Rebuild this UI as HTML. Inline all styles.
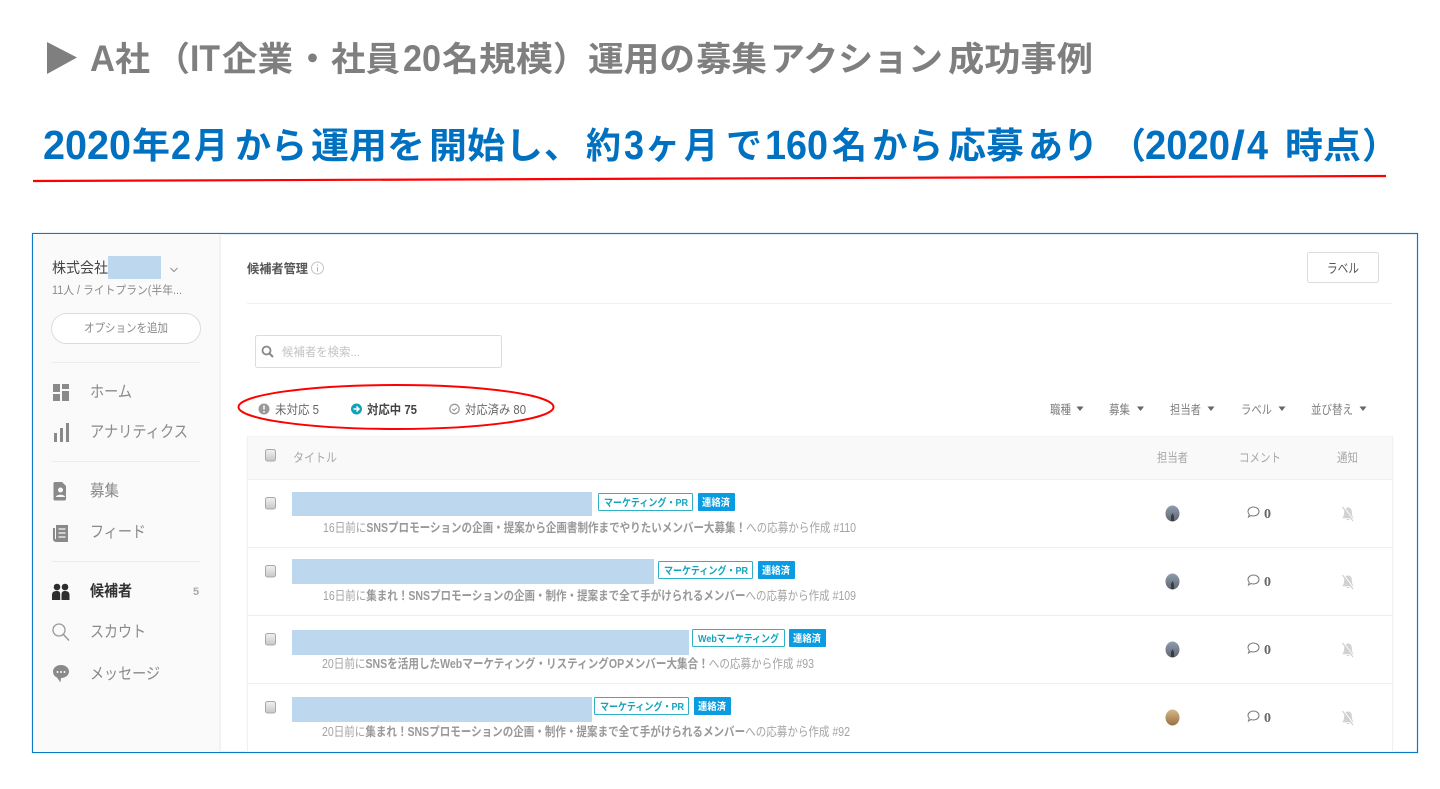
<!DOCTYPE html>
<html lang="ja">
<head>
<meta charset="utf-8">
<title>A社 運用の募集アクション成功事例</title>
<style>
html,body{margin:0;padding:0;background:#fff;width:1440px;height:789px;overflow:hidden}
svg{display:block}
text{font-family:"Liberation Sans","Noto Sans CJK JP",sans-serif}
.b{font-weight:700}
.s{font-size:13px;fill:#7f7f7f}
.n{font-size:16px;fill:#8a8a8a}
.h{font-size:12.5px;fill:#a8a8a8}
.sub{font-size:12.5px;fill:#a3a3a3}
.t1{font-size:10.5px;font-weight:700;fill:#14a5bd}
.t2{font-size:10px;font-weight:700;fill:#fff}
.g{font-weight:700;fill:#7f7f7f;font-size:34px}
.gl{font-weight:700;fill:#7f7f7f;font-size:37px}
.u{font-weight:700;fill:#0070c0;font-size:36px}
.ul{font-weight:700;fill:#0070c0;font-size:41px}
</style>
</head>
<body>
<svg width="1440" height="789" viewBox="0 0 1440 789" xmlns="http://www.w3.org/2000/svg">
<defs>
<linearGradient id="cb" x1="0" y1="0" x2="0" y2="1"><stop offset="0" stop-color="#f2f2f2"/><stop offset="1" stop-color="#c6c6c6"/></linearGradient>
<linearGradient id="av" x1="0" y1="0" x2="0" y2="1"><stop offset="0" stop-color="#8f9cb0"/><stop offset="1" stop-color="#5f6670"/></linearGradient>
<linearGradient id="av2" x1="0" y1="0" x2="0" y2="1"><stop offset="0" stop-color="#d5b888"/><stop offset="1" stop-color="#9a6f42"/></linearGradient>
<g id="check"><rect x=".5" y=".5" width="10" height="11.5" rx="2" fill="url(#cb)" stroke="#a9a9a9"/></g>
<g id="cm"><path d="M1 5.500C1 3 3.400 1 6.500 1S12 3 12 5.500 9.600 10 6.500 10C5.500 10 4.800 9.800 4 9.500L1.500 11 2.300 8.400C1.500 7.600 1 6.600 1 5.500Z" fill="none" stroke="#777" stroke-width="1"/></g>
<g id="bell"><path d="M7 1.500c-2.600 0-3.800 2-3.800 4.300 0 3-.8 5-1.900 6.500h11.400c-1.100-1.500-1.900-3.500-1.900-6.500C10.800 3.500 9.600 1.500 7 1.500Z" fill="#d2d2d2"/><path d="M5.300 13a1.800 1.800 0 0 0 3.400 0Z" fill="#d2d2d2"/><path d="M2.500 0.500l10.500 14" stroke="#fff" stroke-width="1"/><path d="M1.500 1l10.500 14" stroke="#cfcfcf" stroke-width="1.200"/></g>
<g id="ava"><ellipse cx="0" cy="0" rx="7" ry="8" fill="url(#av)"/><path d="M-1.500 7.500v-5l1.500-3 1.500 3v5Z" fill="#3c3c3c"/></g>
</defs>

<rect width="1440" height="789" fill="#fff"/>

<!-- Heading 1 -->
<path d="M47 42V74L77 57.500Z" fill="#7f7f7f"/>
<text x="90" y="71" class="gl" textLength="25" lengthAdjust="spacingAndGlyphs">A</text>
<text x="115" y="71" class="g" textLength="35" lengthAdjust="spacingAndGlyphs">社</text>
<text x="156" y="71" class="g">（</text>
<text x="190" y="71" class="gl" textLength="30" lengthAdjust="spacingAndGlyphs">IT</text>
<text x="222" y="71" class="g" textLength="71" lengthAdjust="spacingAndGlyphs">企業</text>
<text x="295.500" y="71" class="g">・</text>
<text x="331" y="71" class="g" textLength="69" lengthAdjust="spacingAndGlyphs">社員</text>
<text x="403" y="71" class="gl" textLength="38" lengthAdjust="spacingAndGlyphs">20</text>
<text x="442" y="71" class="g" textLength="111" lengthAdjust="spacingAndGlyphs">名規模</text>
<text x="553" y="71" class="g">）</text>
<text x="588" y="71" class="g" textLength="107" lengthAdjust="spacingAndGlyphs">運用の</text>
<text x="696" y="71" class="g" textLength="71" lengthAdjust="spacingAndGlyphs">募集</text>
<text x="770" y="71" class="g" textLength="173" lengthAdjust="spacingAndGlyphs">アクション</text>
<text x="948" y="71" class="g" textLength="145" lengthAdjust="spacingAndGlyphs">成功事例</text>

<!-- Heading 2 -->
<text x="43" y="159" class="ul" textLength="88" lengthAdjust="spacingAndGlyphs">2020</text>
<text x="132" y="158" class="u" textLength="38" lengthAdjust="spacingAndGlyphs">年</text>
<text x="171" y="159" class="ul" textLength="20" lengthAdjust="spacingAndGlyphs">2</text>
<text x="194" y="158" class="u" textLength="34" lengthAdjust="spacingAndGlyphs">月</text>
<text x="235" y="158" class="u" textLength="72" lengthAdjust="spacingAndGlyphs">から</text>
<text x="311" y="158" class="u" textLength="114" lengthAdjust="spacingAndGlyphs">運用を</text>
<text x="429" y="158" class="u" textLength="114" lengthAdjust="spacingAndGlyphs">開始し</text>
<text x="544" y="158" class="u">、</text>
<text x="586" y="158" class="u" textLength="35" lengthAdjust="spacingAndGlyphs">約</text>
<text x="624" y="159" class="ul" textLength="20" lengthAdjust="spacingAndGlyphs">3</text>
<text x="645" y="158" class="u" textLength="35" lengthAdjust="spacingAndGlyphs">ヶ</text>
<text x="684" y="158" class="u" textLength="34" lengthAdjust="spacingAndGlyphs">月</text>
<text x="726" y="158" class="u" textLength="36" lengthAdjust="spacingAndGlyphs">で</text>
<text x="765" y="159" class="ul" textLength="63" lengthAdjust="spacingAndGlyphs">160</text>
<text x="832" y="158" class="u" textLength="35" lengthAdjust="spacingAndGlyphs">名</text>
<text x="872" y="158" class="u" textLength="71" lengthAdjust="spacingAndGlyphs">から</text>
<text x="948" y="158" class="u" textLength="76" lengthAdjust="spacingAndGlyphs">応募</text>
<text x="1028" y="158" class="u" textLength="70" lengthAdjust="spacingAndGlyphs">あり</text>
<text x="1110" y="158" class="u">（</text>
<text x="1145" y="159" class="ul" textLength="85" lengthAdjust="spacingAndGlyphs">2020</text>
<text x="1231" y="159" class="ul" textLength="14" lengthAdjust="spacingAndGlyphs">/</text>
<text x="1247" y="159" class="ul" textLength="21" lengthAdjust="spacingAndGlyphs">4</text>
<text x="1285" y="158" class="u" textLength="76" lengthAdjust="spacingAndGlyphs">時点</text>
<text x="1362" y="158" class="u">）</text>
<path d="M33 181L1386 176" stroke="#f00" stroke-width="2.200"/>

<!-- Frame -->
<rect x="32.500" y="233.500" width="1385" height="519" fill="#fff" stroke="#0b78c8" stroke-width="1.200"/>
<rect x="33" y="234" width="186" height="518" fill="#fafafa"/>
<rect x="219" y="234" width="2" height="518" fill="#f2f2f2"/>

<!-- Sidebar header -->
<text x="52" y="273" font-size="14.500" fill="#444" textLength="56" lengthAdjust="spacingAndGlyphs">株式会社</text>
<rect x="108" y="256" width="53" height="23" fill="#bdd7ee"/>
<path d="M170.500 268l3.500 3.500 3.500-3.500" fill="none" stroke="#999" stroke-width="1.200"/>
<text x="52" y="294" font-size="11.500" fill="#8b8b8b" textLength="130" lengthAdjust="spacingAndGlyphs">11人 / ライトプラン(半年...</text>
<rect x="51.500" y="313.500" width="149" height="30" rx="15" fill="#fff" stroke="#dcdcdc"/>
<text x="84" y="332" font-size="12" fill="#8a8a8a" textLength="84" lengthAdjust="spacingAndGlyphs">オプションを追加</text>
<rect x="52" y="362" width="148" height="1" fill="#ececec"/>

<!-- Sidebar nav -->
<g fill="#8a8a8a">
<rect x="53" y="384" width="7" height="8"/><rect x="62" y="384" width="7" height="5"/><rect x="53" y="394" width="7" height="7"/><rect x="62" y="391" width="7" height="10"/>
<rect x="54" y="433" width="3" height="9"/><rect x="60" y="428" width="3" height="14"/><rect x="66" y="423" width="3" height="19"/>
<path d="M55 482h7l4 4v13a1.500 1.500 0 0 1-1.500 1.500h-9.500A1.500 1.500 0 0 1 53.500 499v-15.500A1.500 1.500 0 0 1 55 482Z"/>
<path d="M56 525h12v17H56a3 3 0 0 1-3-3v-11h2v11h1Z"/>
</g>
<circle cx="60.500" cy="490" r="2.500" fill="#fafafa"/><path d="M56 497c0-3 9-3 9 0Z" fill="#fafafa"/>
<path d="M58.500 529h7M58.500 533h7M58.500 537h7" stroke="#fafafa" stroke-width="1.300"/>
<text x="90" y="397" class="n" textLength="42" lengthAdjust="spacingAndGlyphs">ホーム</text>
<text x="90" y="437" class="n" textLength="98" lengthAdjust="spacingAndGlyphs">アナリティクス</text>
<rect x="52" y="461" width="148" height="1" fill="#ececec"/>
<text x="90" y="496" class="n" textLength="29" lengthAdjust="spacingAndGlyphs">募集</text>
<text x="90" y="537" class="n" textLength="56" lengthAdjust="spacingAndGlyphs">フィード</text>
<rect x="52" y="561" width="148" height="1" fill="#ececec"/>

<g fill="#2e2e2e">
<circle cx="57" cy="587" r="3.300"/><circle cx="65" cy="587" r="3.300"/>
<path d="M52 600v-5c0-3 2-4 4.800-4s3.400 1 3.400 4v5ZM61.500 600v-5c0-3 1-4 3.500-4s4.500 1 4.500 4v5Z"/>
</g>
<text x="90" y="596" class="b" font-size="15.500" fill="#333" textLength="42" lengthAdjust="spacingAndGlyphs">候補者</text>
<text x="193" y="595" class="b" font-size="11" fill="#aaa">5</text>
<circle cx="59" cy="630" r="6" fill="none" stroke="#999" stroke-width="1.300"/><path d="M63.500 634.500l5.500 6" stroke="#999" stroke-width="1.500"/>
<text x="90" y="637" class="n" textLength="56" lengthAdjust="spacingAndGlyphs">スカウト</text>
<path d="M61 665c4.600 0 8 3 8 6.500S65.600 678 61 678l-.5 4.500-3.500-5c-2.500-1-4-3.300-4-6 0-3.500 3.400-6.500 8-6.500Z" fill="#8a8a8a"/>
<circle cx="57.500" cy="672" r="1" fill="#fafafa"/><circle cx="61" cy="672" r="1" fill="#fafafa"/><circle cx="64.500" cy="672" r="1" fill="#fafafa"/>
<text x="90" y="679" class="n" textLength="70" lengthAdjust="spacingAndGlyphs">メッセージ</text>

<!-- Main header -->
<text x="247" y="273" font-size="12.500" class="b" fill="#555" textLength="61" lengthAdjust="spacingAndGlyphs">候補者管理</text>
<circle cx="317.500" cy="268" r="6" fill="none" stroke="#c4c4c4"/>
<path d="M317.500 267v4.500M317.500 264.500v1.300" stroke="#b5b5b5" stroke-width="1"/>
<rect x="1307.500" y="252.500" width="71" height="30" rx="2" fill="#fff" stroke="#dcdcdc"/>
<text x="1327" y="273" font-size="13" fill="#555" textLength="32" lengthAdjust="spacingAndGlyphs">ラベル</text>
<rect x="247" y="303" width="1145" height="1" fill="#efefef"/>

<!-- Search -->
<rect x="255.500" y="335.500" width="246" height="32" rx="2" fill="#fff" stroke="#dcdcdc"/>
<circle cx="266.500" cy="350.500" r="4" fill="none" stroke="#888" stroke-width="1.800"/><path d="M269.500 353.500l3.500 3.500" stroke="#888" stroke-width="2"/>
<text x="282" y="356" font-size="12" fill="#c4c4c4" textLength="78" lengthAdjust="spacingAndGlyphs">候補者を検索...</text>

<!-- Status tabs -->
<circle cx="264" cy="409" r="5.500" fill="#999"/><path d="M264 405.500v4M264 411v1.500" stroke="#fff" stroke-width="1.500"/>
<text x="275" y="414" font-size="12.500" fill="#666" textLength="44" lengthAdjust="spacingAndGlyphs">未対応 5</text>
<circle cx="356.500" cy="409" r="5.500" fill="#12a3bb"/><path d="M353.500 409h5M356.500 406.500l2.500 2.500-2.500 2.500" fill="none" stroke="#fff" stroke-width="1.500"/>
<text x="367" y="414" class="b" font-size="12.500" fill="#444" textLength="50" lengthAdjust="spacingAndGlyphs">対応中 75</text>
<circle cx="454.500" cy="409" r="4.700" fill="none" stroke="#999" stroke-width="1.300"/><path d="M452.300 409l1.700 1.700 2.800-2.900" fill="none" stroke="#999" stroke-width="1.100"/>
<text x="465" y="414" font-size="12.500" fill="#666" textLength="61" lengthAdjust="spacingAndGlyphs">対応済み 80</text>
<ellipse cx="396" cy="407" rx="157.500" ry="22" fill="none" stroke="#f00" stroke-width="2"/>

<!-- Filters -->
<g>
<text x="1050" y="414" class="h" style="fill:#808080" textLength="21" lengthAdjust="spacingAndGlyphs">職種</text>
<text x="1109" y="414" class="h" style="fill:#808080" textLength="21" lengthAdjust="spacingAndGlyphs">募集</text>
<text x="1170" y="414" class="h" style="fill:#808080" textLength="31" lengthAdjust="spacingAndGlyphs">担当者</text>
<text x="1241" y="414" class="h" style="fill:#808080" textLength="31" lengthAdjust="spacingAndGlyphs">ラベル</text>
<text x="1311" y="414" class="h" style="fill:#808080" textLength="42" lengthAdjust="spacingAndGlyphs">並び替え</text>
</g>
<g fill="#666">
<path d="M1076.500 406.500h7l-3.500 4.500Z"/><path d="M1137 406.500h7l-3.500 4.500Z"/><path d="M1207.500 406.500h7l-3.500 4.500Z"/><path d="M1278.500 406.500h7l-3.500 4.500Z"/><path d="M1359.500 406.500h7l-3.500 4.500Z"/>
</g>

<!-- Table -->
<rect x="246" y="435" width="1148" height="317" fill="#fcfcfc"/>
<rect x="247.500" y="437" width="1145" height="315" fill="#fff" stroke="#f0f0f0"/>
<rect x="248" y="438" width="1144" height="41" fill="#f9f9f9"/>
<rect x="248" y="479" width="1144" height="1" fill="#eee"/>
<rect x="248" y="547" width="1144" height="1" fill="#eee"/>
<rect x="248" y="615" width="1144" height="1" fill="#eee"/>
<rect x="248" y="683" width="1144" height="1" fill="#eee"/>
<use href="#check" x="265" y="449"/>
<text x="293" y="462" class="h" textLength="44" lengthAdjust="spacingAndGlyphs">タイトル</text>
<text x="1157" y="462" class="h" textLength="31" lengthAdjust="spacingAndGlyphs">担当者</text>
<text x="1239" y="462" class="h" textLength="42" lengthAdjust="spacingAndGlyphs">コメント</text>
<text x="1337" y="462" class="h" textLength="21" lengthAdjust="spacingAndGlyphs">通知</text>

<!-- Row 1 -->
<use href="#check" x="265" y="497"/>
<rect x="292" y="492" width="300" height="24" fill="#bdd7ee"/>
<rect x="598.500" y="493.500" width="94" height="17" rx="1" fill="#fff" stroke="#2fb0c4"/>
<text x="604" y="506" class="t1" textLength="84" lengthAdjust="spacingAndGlyphs">マーケティング・PR</text>
<rect x="698" y="493" width="37" height="18" rx="1" fill="#0a9be0"/>
<text x="702" y="506" class="t2" textLength="28" lengthAdjust="spacingAndGlyphs">連絡済</text>
<text x="323" y="532" class="sub"><tspan textLength="533" lengthAdjust="spacingAndGlyphs">16日前に<tspan class="b" fill="#999">SNSプロモーションの企画・提案から企画書制作までやりたいメンバー大募集！</tspan>への応募から作成 #110</tspan></text>
<use href="#ava" x="1172.500" y="513.500"/>
<use href="#cm" x="1247" y="506"/>
<text x="1264" y="518" font-size="14" class="b" fill="#666" style="font-family:'Liberation Serif',serif">0</text>
<use href="#bell" x="1341" y="506"/>

<!-- Row 2 -->
<use href="#check" x="265" y="565"/>
<rect x="292" y="559" width="362" height="25" fill="#bdd7ee"/>
<rect x="658.500" y="561.500" width="94" height="17" rx="1" fill="#fff" stroke="#2fb0c4"/>
<text x="664" y="574" class="t1" textLength="84" lengthAdjust="spacingAndGlyphs">マーケティング・PR</text>
<rect x="758" y="561" width="37" height="18" rx="1" fill="#0a9be0"/>
<text x="762" y="574" class="t2" textLength="28" lengthAdjust="spacingAndGlyphs">連絡済</text>
<text x="323" y="600" class="sub"><tspan textLength="533" lengthAdjust="spacingAndGlyphs">16日前に<tspan class="b" fill="#999">集まれ！SNSプロモーションの企画・制作・提案まで全て手がけられるメンバー</tspan>への応募から作成 #109</tspan></text>
<use href="#ava" x="1172.500" y="581.500"/>
<use href="#cm" x="1247" y="574"/>
<text x="1264" y="586" font-size="14" class="b" fill="#666" style="font-family:'Liberation Serif',serif">0</text>
<use href="#bell" x="1341" y="574"/>

<!-- Row 3 -->
<use href="#check" x="265" y="633"/>
<rect x="292" y="630" width="397" height="25" fill="#bdd7ee"/>
<rect x="692.500" y="629.500" width="92" height="17" rx="1" fill="#fff" stroke="#2fb0c4"/>
<text x="698" y="642" class="t1" textLength="81" lengthAdjust="spacingAndGlyphs">Webマーケティング</text>
<rect x="789" y="629" width="37" height="18" rx="1" fill="#0a9be0"/>
<text x="793" y="642" class="t2" textLength="28" lengthAdjust="spacingAndGlyphs">連絡済</text>
<text x="322" y="668" class="sub"><tspan textLength="492" lengthAdjust="spacingAndGlyphs">20日前に<tspan class="b" fill="#999">SNSを活用したWebマーケティング・リスティングOPメンバー大集合！</tspan>への応募から作成 #93</tspan></text>
<use href="#ava" x="1172.500" y="649.500"/>
<use href="#cm" x="1247" y="642"/>
<text x="1264" y="654" font-size="14" class="b" fill="#666" style="font-family:'Liberation Serif',serif">0</text>
<use href="#bell" x="1341" y="642"/>

<!-- Row 4 -->
<use href="#check" x="265" y="701"/>
<rect x="292" y="697" width="300" height="25" fill="#bdd7ee"/>
<rect x="594.500" y="697.500" width="94" height="17" rx="1" fill="#fff" stroke="#2fb0c4"/>
<text x="600" y="710" class="t1" textLength="84" lengthAdjust="spacingAndGlyphs">マーケティング・PR</text>
<rect x="694" y="697" width="37" height="18" rx="1" fill="#0a9be0"/>
<text x="698" y="710" class="t2" textLength="28" lengthAdjust="spacingAndGlyphs">連絡済</text>
<text x="322" y="736" class="sub"><tspan textLength="528" lengthAdjust="spacingAndGlyphs">20日前に<tspan class="b" fill="#999">集まれ！SNSプロモーションの企画・制作・提案まで全て手がけられるメンバー</tspan>への応募から作成 #92</tspan></text>
<ellipse cx="1172.500" cy="717.500" rx="7" ry="8" fill="url(#av2)"/>
<use href="#cm" x="1247" y="710"/>
<text x="1264" y="722" font-size="14" class="b" fill="#666" style="font-family:'Liberation Serif',serif">0</text>
<use href="#bell" x="1341" y="710"/>

<rect x="32" y="752" width="1386" height="1" fill="#0b78c8"/>
</svg>
</body>
</html>
